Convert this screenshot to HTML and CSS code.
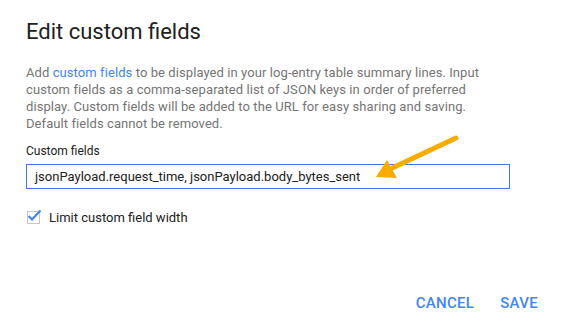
FILE: index.html
```html
<!DOCTYPE html>
<html lang="en">

<head>
    <meta charset="UTF-8">
    <meta name="viewport" content="width=device-width, initial-scale=1.0">
    <title>Edit custom fields</title>
    <link rel="stylesheet" href="styles.css">
</head>

<body>
    <div class="dialog">
        <h1 class="title">Edit custom fields</h1>

        <p class="description">Add <a href="#">custom fields</a> to be displayed in your log-entry table summary lines. Input custom fields as a comma-separated list of JSON keys in order of preferred display. Custom fields will be added to the URL for easy sharing and saving. Default fields cannot be removed.</p>

        <label class="field-label" for="fields">Custom fields</label>
        <div class="input-box" id="fields">jsonPayload.request_time, jsonPayload.body_bytes_sent</div>

        <div class="check-row">
            <span class="checkbox">
                <svg width="15" height="13" viewBox="0 0 15 13">
                    <path d="M1.5 7 L5 10.5 L13.5 1.5" fill="none" stroke="#4285f4" stroke-width="2.2" />
                </svg>
            </span>
            <span class="check-label">Limit custom field width</span>
        </div>

        <div class="actions">
            <button class="action">CANCEL</button>
            <button class="action">SAVE</button>
        </div>

        <svg class="arrow" width="561" height="330" viewBox="0 0 561 330">
            <line x1="456" y1="138" x2="388" y2="170" stroke="#f9ab00" stroke-width="5" stroke-linecap="round" />
            <polygon points="376,177 387,160 397,178" fill="#f9ab00" />
        </svg>
    </div>
</body>

</html>
```

FILE: styles.css
```css
body {
    margin: 0;
    background: #fff;
    font-family: Roboto, "Liberation Sans", sans-serif;
}

.dialog {
    position: relative;
    width: 561px;
    height: 330px;
    padding: 18px 0 0 26px;
    box-sizing: border-box;
}

.title {
    margin: 0;
    font-size: 22px;
    line-height: 28px;
    font-weight: 400;
    color: #212121;
}

.description {
    width: 470px;
    margin: 18px 0 0;
    font-size: 13px;
    line-height: 17px;
    letter-spacing: 0.08px;
    color: #757575;
}

.description a {
    color: #4285f4;
    text-decoration: none;
}

.field-label {
    display: block;
    margin-top: 11px;
    font-size: 12px;
    line-height: 16px;
    color: #212121;
}

.input-box {
    width: 484px;
    height: 25px;
    margin-top: 5px;
    padding: 0 8px;
    box-sizing: border-box;
    border: 1px solid #3b78e7;
    font-size: 13px;
    line-height: 23px;
    color: #212121;
}

.check-row {
    display: flex;
    align-items: center;
    margin-top: 20px;
}

.checkbox {
    position: relative;
    width: 11px;
    height: 11px;
    border: 1px solid #c6c6c6;
    margin-left: 1px;
}

.checkbox svg {
    position: absolute;
    left: -1px;
    top: -3px;
}

.check-label {
    margin-left: 9px;
    font-size: 13px;
    line-height: 17px;
    color: #212121;
}

.actions {
    display: flex;
    justify-content: flex-end;
    gap: 26px;
    width: 512px;
    margin-top: 68px;
}

.action {
    padding: 0;
    border: none;
    background: none;
    font-family: Roboto, "Liberation Sans", sans-serif;
    font-size: 15px;
    font-weight: 500;
    letter-spacing: 0.3px;
    line-height: 18px;
    color: #4285f4;
    cursor: pointer;
}

.arrow {
    position: absolute;
    left: 0;
    top: 0;
    pointer-events: none;
}
```
